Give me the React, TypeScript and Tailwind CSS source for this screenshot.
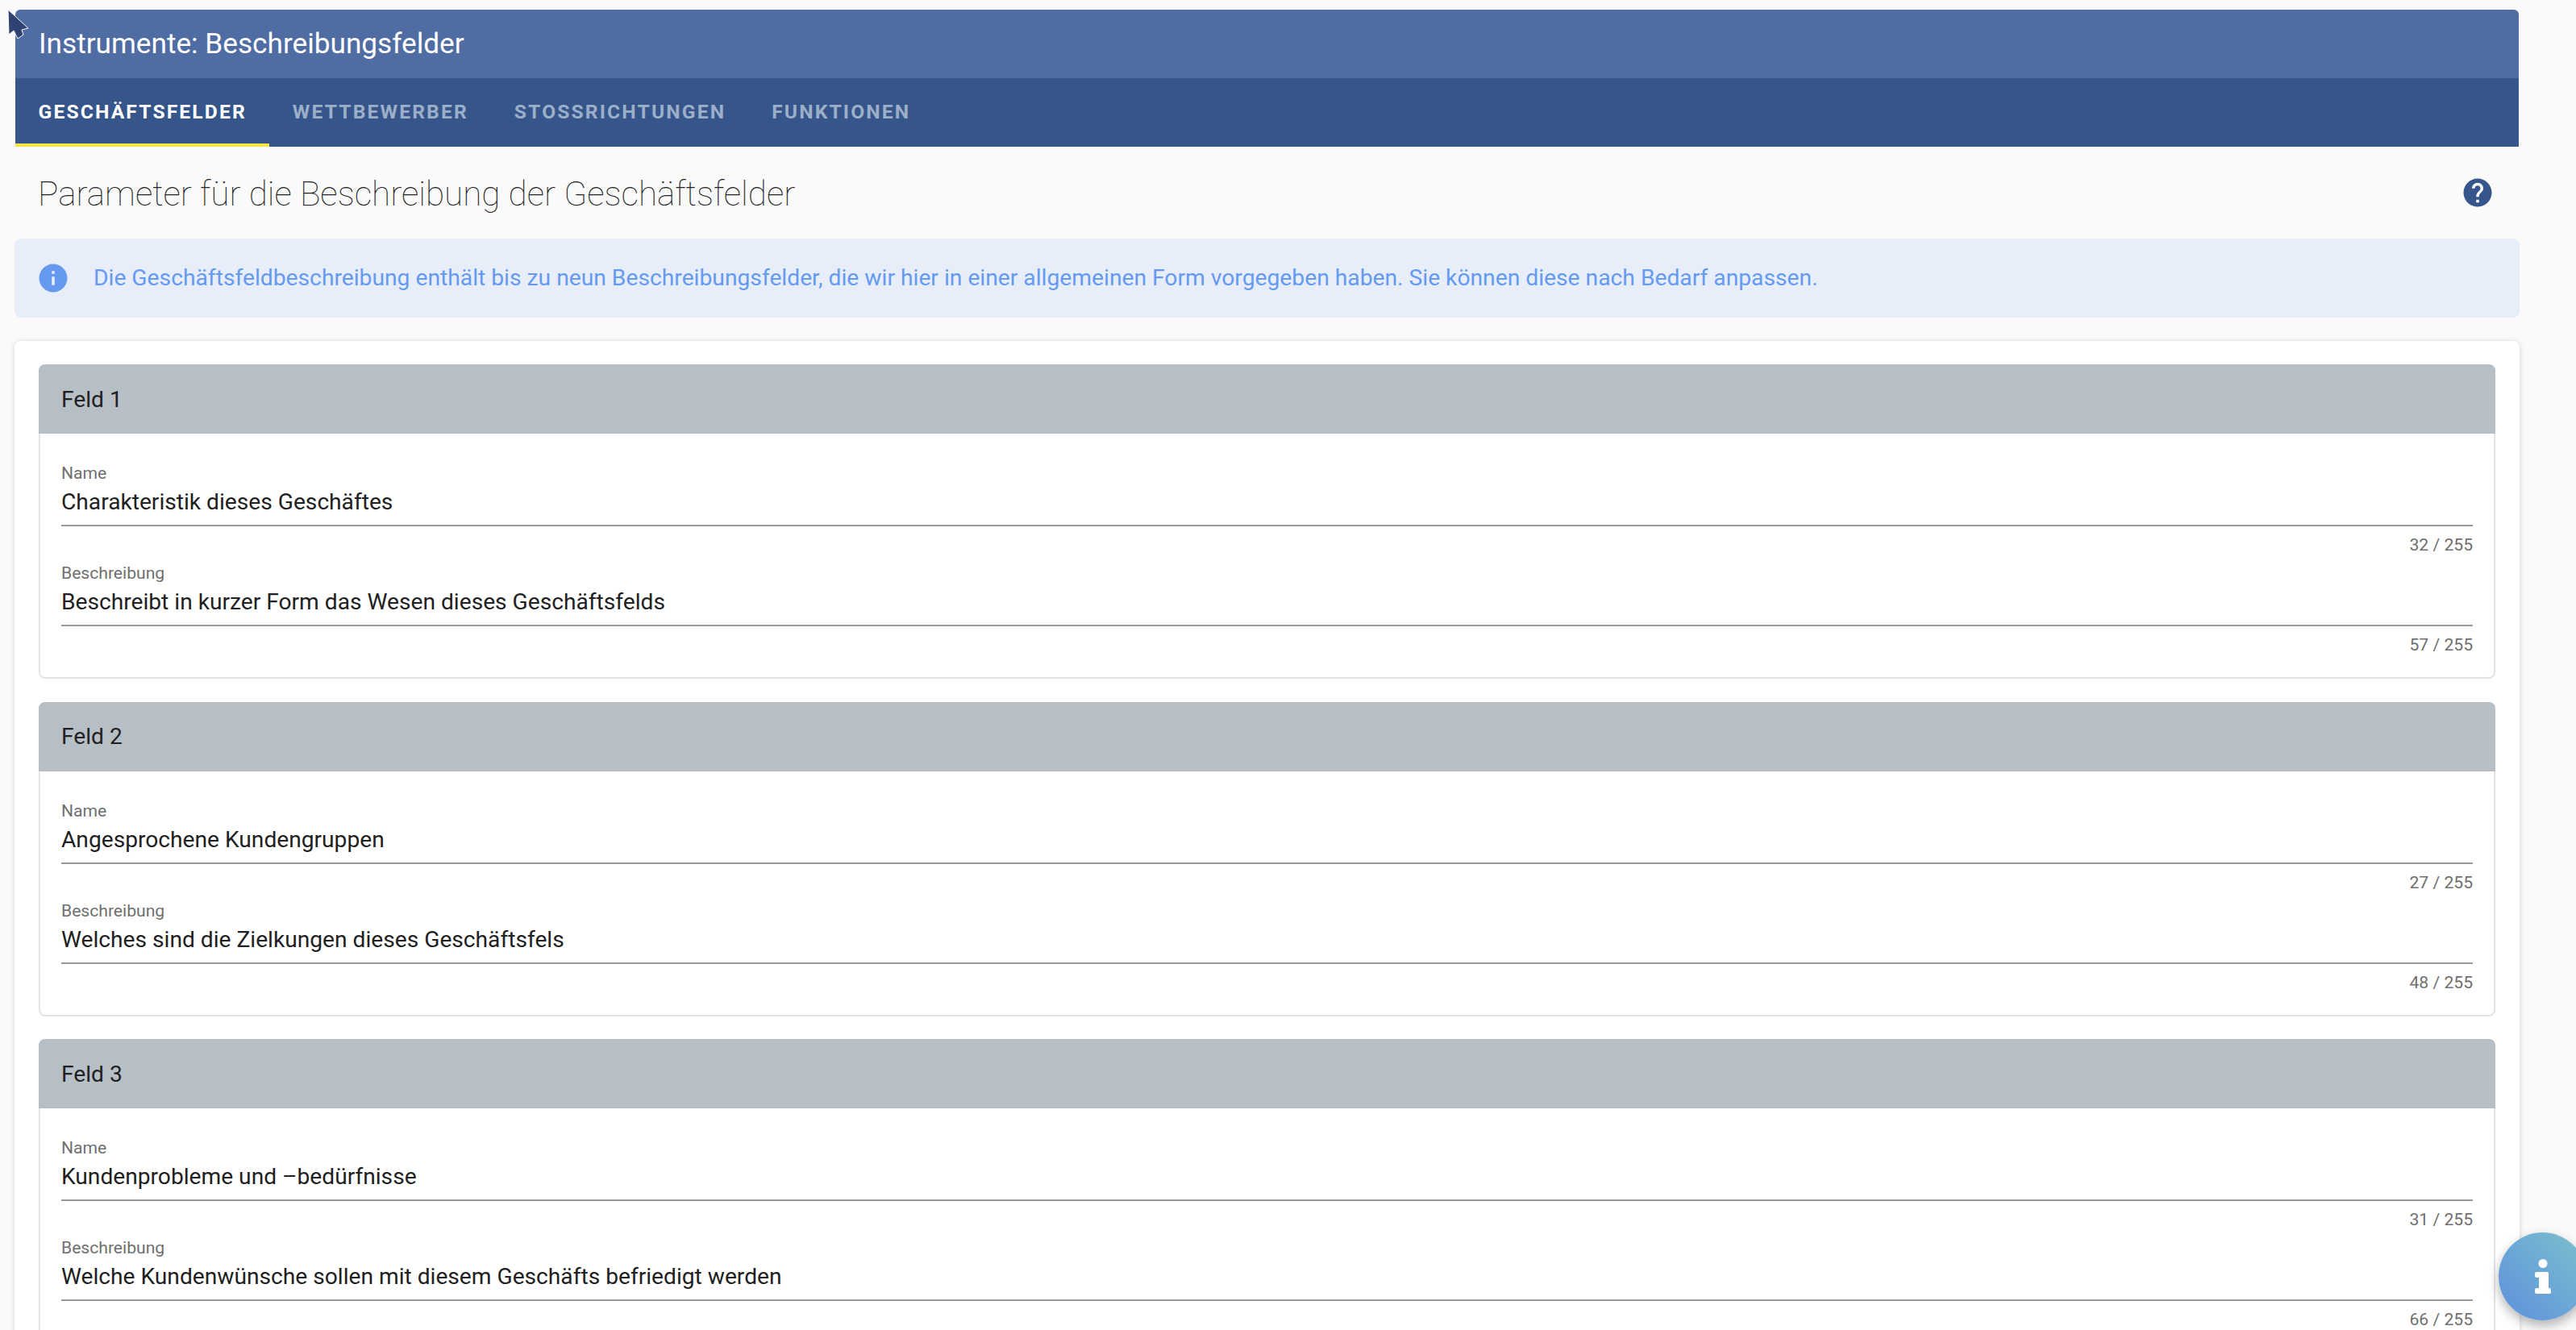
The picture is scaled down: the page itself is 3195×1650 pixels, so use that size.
const tabs = ["Geschäftsfelder", "Wettbewerber", "Stossrichtungen", "Funktionen"];

const fields = [
  {
    title: "Feld 1",
    name: "Charakteristik dieses Geschäftes",
    nameCount: 32,
    desc: "Beschreibt in kurzer Form das Wesen dieses Geschäftsfelds",
    descCount: 57,
  },
  {
    title: "Feld 2",
    name: "Angesprochene Kundengruppen",
    nameCount: 27,
    desc: "Welches sind die Zielkungen dieses Geschäftsfels",
    descCount: 48,
  },
  {
    title: "Feld 3",
    name: "Kundenprobleme und –bedürfnisse",
    nameCount: 31,
    desc: "Welche Kundenwünsche sollen mit diesem Geschäfts befriedigt werden",
    descCount: 66,
  },
];

function TextField({ label, value, count }: { label: string; value: string; count: number }) {
  return (
    <div className="h-[124px]">
      <div className="h-[29px] pt-[5px] text-[21.12px] leading-[22px] text-[#6f6f6f]">{label}</div>
      <div className="h-[53px] border-b-2 border-[#9a9a9a] text-[28.16px] leading-[46px] text-[#212121]">{value}</div>
      <div className="pt-[12px] text-right text-[21.12px] leading-[22px] text-[#6f6f6f]">{count} / 255</div>
    </div>
  );
}

export default function App() {
  return (
    <div className="relative h-[1650px] overflow-hidden bg-[#fafafa] pl-[19px] pr-[71px] pt-[12px] font-['Roboto',sans-serif]">
      {/* Toolbar */}
      <div className="overflow-hidden rounded-t-[6px]">
        <div className="flex h-[85px] items-center bg-[#4f6ca3] px-[29px] text-[35.2px] text-white">
          Instrumente: Beschreibungsfelder
        </div>
        <div className="flex h-[85px] bg-[#36558b]">
          {tabs.map((tab, i) => (
            <div
              key={tab}
              className={`flex items-center border-b-4 px-[28.5px] pt-[4px] text-[24.64px] font-bold uppercase tracking-[2.13px] ${
                i === 0 ? "border-[#f9e547] text-white" : "border-transparent text-[#9bafc8]"
              }`}
            >
              {tab}
            </div>
          ))}
        </div>
      </div>

      {/* Page heading */}
      <div className="flex h-[114px] items-center justify-between pl-[28px] pr-[30px]">
        <h1 className="pt-[3px] text-[42.24px] font-thin text-[#212121]">Parameter für die Beschreibung der Geschäftsfelder</h1>
        <svg width="42" height="42" viewBox="0 0 24 24" className="fill-[#36558b]">
          <path d="M12 2C6.48 2 2 6.48 2 12s4.48 10 10 10 10-4.48 10-10S17.52 2 12 2zm1 17h-2v-2h2v2zm2.07-7.75-.9.92C13.45 12.9 13 13.5 13 15h-2v-.5c0-1.1.45-2.1 1.17-2.83l1.24-1.26c.37-.36.59-.86.59-1.41 0-1.1-.9-2-2-2s-2 .9-2 2H8c0-2.21 1.79-4 4-4s4 1.79 4 4c0 .88-.36 1.68-.93 2.25z" />
        </svg>
      </div>

      {/* Info alert */}
      <div className="mx-[-1px] flex h-[98px] items-center gap-[29px] rounded-[8px] bg-[#e7eef9] pl-[27px] text-[28.24px] text-[#659af0]">
        <svg width="42" height="42" viewBox="0 0 24 24" className="fill-[#659af0]">
          <path d="M12 2C6.48 2 2 6.48 2 12s4.48 10 10 10 10-4.48 10-10S17.52 2 12 2zm1 15h-2v-6h2v6zm0-8h-2V7h2v2z" />
        </svg>
        Die Geschäftsfeldbeschreibung enthält bis zu neun Beschreibungsfelder, die wir hier in einer allgemeinen Form vorgegeben haben. Sie können diese nach Bedarf anpassen.
      </div>

      {/* Fields card */}
      <div className="mx-[-1px] mt-[29px] rounded-[8px] bg-white px-[30px] pt-[29px] shadow-[0_1px_6px_rgba(0,0,0,0.18)]">
        {fields.map((field) => (
          <div key={field.title} className="mb-[28.5px] rounded-[8px] border-2 border-t-0 border-[#e4e4e4]">
            <div className="-mx-[2px] flex h-[86px] items-center rounded-t-[8px] bg-[#b6bec6] px-[28px] pt-[2px] text-[28.16px] text-[#212121]">
              {field.title}
            </div>
            <div className="px-[26px] pb-[21px] pt-[33px]">
              <TextField label="Name" value={field.name} count={field.nameCount} />
              <TextField label="Beschreibung" value={field.desc} count={field.descCount} />
            </div>
          </div>
        ))}
      </div>

      {/* Floating help button */}
      <div className="absolute left-[3099px] top-[1529px] flex h-[109px] w-[109px] items-center justify-center rounded-full bg-gradient-to-tr from-[#5f8fdd] to-[#7dc0cc] shadow-[0_6px_14px_rgba(0,0,0,0.3)]">
        <svg width="20" height="44" viewBox="0 0 20 44" className="fill-white">
          <circle cx="10" cy="5.5" r="5.5" />
          <path d="M2 16h13a2 2 0 0 1 2 2v18h1a2 2 0 0 1 2 2v3a2 2 0 0 1-2 2H2a2 2 0 0 1-2-2v-3a2 2 0 0 1 2-2h3V23H2a2 2 0 0 1-2-2v-3a2 2 0 0 1 2-2z" />
        </svg>
      </div>

      {/* Mouse cursor */}
      <svg width="27" height="38" viewBox="-1 -1 27 38" className="absolute left-[9px] top-[11px]">
        <path d="M0 0 L25 23 L17 25 L19 31 L12 36 L7 26 L1 31 Z" fill="#2f4271" stroke="#ffffff" strokeWidth="1" />
      </svg>
    </div>
  );
}
